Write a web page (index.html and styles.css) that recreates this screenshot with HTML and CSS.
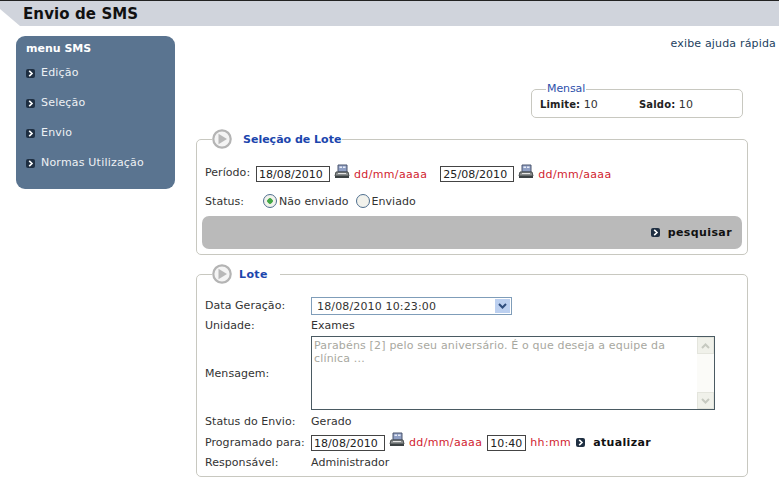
FILE: index.html
```html
<!DOCTYPE html>
<html lang="pt-BR">
<head>
    <meta charset="UTF-8">
    <title>Envio de SMS</title>
    <link rel="stylesheet" href="styles.css">
</head>
<body>
    <svg class="icon-defs" width="0" height="0">
        <symbol id="bullet" viewBox="0 0 9 9">
            <rect width="9" height="9" rx="2" fill="#1f2f42"/>
            <path d="M3.2 1.8 L6 4.5 L3.2 7.2" fill="none" stroke="#fff" stroke-width="1.6"/>
        </symbol>
        <symbol id="play" viewBox="0 0 20 20">
            <circle cx="10" cy="10" r="8.7" fill="#f4f4f4" stroke="#b4b4b4" stroke-width="2.2"/>
            <path d="M6.5 4.8 L15 10 L6.5 15.2 Z" fill="#b8b8b8"/>
        </symbol>
        <symbol id="printer" viewBox="0 0 16 16">
            <path d="M4 1 H13 V8 H4 Z" fill="#8f9fc4" stroke="#4c566e"/>
            <path d="M5.5 2.5 H8 V4 H5.5 Z M9 2.5 H11.5 V4 H9 Z" fill="#e8ecf6"/>
            <path d="M2 8 H14 L15 12 H1 Z" fill="#8a8e8e" stroke="#454a4c"/>
            <path d="M1 12 H15 V14 H1 Z" fill="#3c4244"/>
            <path d="M4 9.5 H12" stroke="#e4e4e4"/>
        </symbol>
    </svg>

    <header class="title-bar">
        <h1>Envio de SMS</h1>
    </header>

    <div class="page">
        <nav class="side-menu">
            <h2>menu SMS</h2>
            <a><svg class="bullet"><use href="#bullet"/></svg>Edição</a>
            <a><svg class="bullet"><use href="#bullet"/></svg>Seleção</a>
            <a><svg class="bullet"><use href="#bullet"/></svg>Envio</a>
            <a><svg class="bullet"><use href="#bullet"/></svg>Normas Utilização</a>
        </nav>

        <main class="content">
            <a class="help-link">exibe ajuda rápida</a>

            <fieldset class="quota">
                <legend>Mensal</legend>
                <div class="quota-row">
                    <span class="quota-item"><b>Limite:</b> 10</span>
                    <span><b>Saldo:</b> 10</span>
                </div>
            </fieldset>

            <fieldset class="panel panel-search">
                <legend>
                    <svg class="play"><use href="#play"/></svg>
                    <span class="legend-text">Seleção de Lote</span>
                </legend>
                <div class="form-line period-line">
                    <span class="period-label">Período:</span>
                    <span class="date-box">18/08/2010</span>
                    <svg class="printer"><use href="#printer"/></svg>
                    <span class="hint">dd/mm/aaaa</span>
                    <span class="date-box second-date">25/08/2010</span>
                    <svg class="printer"><use href="#printer"/></svg>
                    <span class="hint">dd/mm/aaaa</span>
                </div>
                <div class="form-line status-line">
                    <span class="status-label">Status:</span>
                    <span class="radio radio-on"></span>
                    <span class="radio-text">Não enviado</span>
                    <span class="radio"></span>
                    <span class="radio-text">Enviado</span>
                </div>
                <div class="action-bar">
                    <svg class="bullet"><use href="#bullet"/></svg>
                    <b>pesquisar</b>
                </div>
            </fieldset>

            <fieldset class="panel panel-batch">
                <legend>
                    <svg class="play"><use href="#play"/></svg>
                    <span class="legend-text legend-short">Lote</span>
                </legend>
                <div class="batch-grid">
                    <span>Data Geração:</span>
                    <div class="select-box">
                        <span>18/08/2010 10:23:00</span>
                        <span class="select-arrow">
                            <svg width="9" height="6" viewBox="0 0 9 6"><path d="M1 1 L4.5 4.5 L8 1" fill="none" stroke="#2f4d7d" stroke-width="2"/></svg>
                        </span>
                    </div>
                    <span>Unidade:</span>
                    <span>Exames</span>
                    <span>Mensagem:</span>
                    <div class="message-box">
                        <p>Parabéns [2] pelo seu aniversário. É o que deseja a equipe da clínica ...</p>
                        <div class="scrollbar">
                            <span class="scroll-btn"><svg width="9" height="6" viewBox="0 0 9 6"><path d="M1 5 L4.5 1.5 L8 5" fill="none" stroke="#c6c9c0" stroke-width="2"/></svg></span>
                            <span class="scroll-btn"><svg width="9" height="6" viewBox="0 0 9 6"><path d="M1 1 L4.5 4.5 L8 1" fill="none" stroke="#c6c9c0" stroke-width="2"/></svg></span>
                        </div>
                    </div>
                    <span>Status do Envio:</span>
                    <span>Gerado</span>
                    <span>Programado para:</span>
                    <div class="schedule">
                        <span class="date-box">18/08/2010</span>
                        <svg class="printer"><use href="#printer"/></svg>
                        <span class="hint">dd/mm/aaaa</span>
                        <span class="time-box">10:40</span>
                        <span class="hint">hh:mm</span>
                        <svg class="bullet"><use href="#bullet"/></svg>
                        <b class="update">atualizar</b>
                    </div>
                    <span>Responsável:</span>
                    <span>Administrador</span>
                </div>
            </fieldset>
        </main>
    </div>
</body>
</html>
```

FILE: styles.css
```css
html, body {
    margin: 0;
    padding: 0;
}
body {
    width: 779px;
    height: 480px;
    overflow: hidden;
    background-color: #fff;
    color: #333;
    font-family: "DejaVu Sans", Verdana, sans-serif;
    font-size: 11px;
    letter-spacing: 0.05px;
}
.icon-defs {
    position: absolute;
}

/* barra do titulo */
.title-bar {
    height: 25px;
    border-top: 1px solid #222;
    background-color: #d0d4dc;
    clip-path: polygon(0 0, 100% 0, 100% 100%, 20px 100%, 0 9px);
}
.title-bar h1 {
    margin: 0;
    padding-left: 23px;
    color: #111;
    font-size: 15px;
    line-height: 26px;
    letter-spacing: 0.1px;
}

.page {
    display: flex;
    align-items: flex-start;
    padding: 10px 0 0 16px;
}

/* menu lateral */
.side-menu {
    flex: none;
    box-sizing: border-box;
    width: 159px;
    height: 153px;
    padding: 6px 0 0 10px;
    border-radius: 9px;
    background-color: #5a7490;
    color: #fff;
}
.side-menu h2 {
    margin: 0 0 2px;
    font-size: 11px;
    line-height: 14px;
    letter-spacing: 0;
}
.side-menu a {
    display: flex;
    align-items: center;
    height: 30px;
    color: #eef1f4;
    line-height: 14px;
    letter-spacing: 0.2px;
}
.side-menu a .bullet {
    margin-right: 6px;
}
.bullet {
    flex: none;
    width: 9px;
    height: 9px;
}

.content {
    flex: none;
    width: 580px;
    margin-left: 21px;
}
.help-link {
    display: block;
    margin-top: 1px;
    color: #1d3f60;
    line-height: 14px;
    letter-spacing: 0.17px;
    text-align: right;
}

/* quadro mensal */
fieldset {
    margin: 0;
    padding: 0;
    min-width: 0;
    border: 1px solid #c8c8c0;
    border-radius: 5px;
}
.quota {
    box-sizing: border-box;
    width: 212px;
    height: 35px;
    margin: 32px 0 0 335px;
    padding: 3px 0 0 8px;
}
.quota legend {
    margin-left: 6px;
    padding: 0 1px;
    color: #2d50ab;
    line-height: 12px;
    letter-spacing: -0.1px;
}
.quota-row {
    display: flex;
    line-height: 13px;
}
.quota-item {
    width: 99px;
}
.quota b {
    color: #222;
    font-size: 10px;
    letter-spacing: 0.15px;
}

/* paineis */
.panel {
    box-sizing: border-box;
    width: 552px;
}
.panel legend {
    display: flex;
    align-items: center;
    height: 20px;
    padding: 0;
}
.play {
    width: 20px;
    height: 20px;
}
.legend-text {
    margin-left: 11px;
    padding-right: 1px;
    color: #1c46ad;
    font-weight: bold;
    letter-spacing: 0;
}
.legend-short {
    margin-left: 7px;
    padding-right: 12px;
    letter-spacing: 0.4px;
}
.panel-search {
    height: 126px;
    margin-top: 11px;
    padding: 0 5px;
}
.panel-search legend {
    margin-left: 10px;
}
.panel-batch {
    height: 213px;
    margin-top: 9px;
    padding: 0 0 0 8px;
}
.panel-batch legend {
    margin-left: 7px;
}

.form-line {
    display: flex;
    align-items: center;
}
.period-line {
    height: 18px;
    margin: 16px 0 0 3px;
}
.period-label {
    width: 51px;
    margin-top: -4px;
}
.date-box, .time-box {
    display: block;
    flex: none;
    box-sizing: border-box;
    width: 74px;
    height: 16px;
    border: 1px solid #444;
    padding-left: 2px;
    background-color: #fff;
    color: #222;
    line-height: 15px;
    white-space: nowrap;
}
.second-date {
    margin-left: 13px;
}
.printer {
    flex: none;
    width: 16px;
    height: 16px;
    margin: -5px 0 0 4px;
}
.hint {
    margin-left: 4px;
    color: #d1232f;
    letter-spacing: 0.35px;
    white-space: nowrap;
}
.status-line {
    height: 18px;
    margin: 9px 0 0 3px;
}
.status-label {
    width: 58px;
}
.radio {
    box-sizing: border-box;
    flex: none;
    width: 14px;
    height: 14px;
    border: 1px solid #4f6f8f;
    border-radius: 50%;
    background-color: #f2f2ec;
}
.radio-on {
    background: radial-gradient(circle, #45a846 0 2.5px, #f2f2ec 3px);
}
.radio-text {
    margin: 0 7px 0 2px;
}
.action-bar {
    display: flex;
    align-items: center;
    justify-content: flex-end;
    box-sizing: border-box;
    height: 33px;
    margin-top: 6px;
    padding-right: 10px;
    border-radius: 7px;
    background-color: #bababa;
}
.action-bar b {
    margin-left: 8px;
    color: #111;
    letter-spacing: 0.4px;
}

/* dados do lote */
.batch-grid {
    display: grid;
    grid-template-columns: 106px 404px;
    align-items: center;
    margin-top: 12px;
}
.batch-grid > span {
    line-height: 20px;
    white-space: nowrap;
}
.select-box {
    display: flex;
    align-items: center;
    justify-content: space-between;
    box-sizing: border-box;
    width: 201px;
    height: 18px;
    padding: 0 1px 0 5px;
    border: 1px solid #7f9db9;
    letter-spacing: 0.15px;
}
.select-arrow {
    display: flex;
    align-items: center;
    justify-content: center;
    width: 15px;
    height: 14px;
    background-color: #bcd0f0;
}
.message-box {
    display: flex;
    box-sizing: border-box;
    height: 74px;
    margin-bottom: 2px;
    border: 1px solid #4a5a62;
}
.message-box p {
    flex: 1;
    margin: 0;
    padding: 2px 2px;
    color: #a8a8a0;
    line-height: 13px;
    letter-spacing: 0.17px;
}
.scrollbar {
    display: flex;
    flex-direction: column;
    justify-content: space-between;
    flex: none;
    width: 17px;
    background-color: #fbfbf8;
}
.scroll-btn {
    display: flex;
    align-items: center;
    justify-content: center;
    height: 15px;
    background-color: #f0f1ea;
    border: 1px solid #e4e5dd;
}
.schedule {
    display: flex;
    align-items: center;
    height: 21px;
}
.time-box {
    width: 39px;
    margin-left: 5px;
}
.schedule .bullet {
    margin-left: 5px;
}
.update {
    margin-left: 8px;
    color: #111;
    letter-spacing: 0.35px;
}
```
